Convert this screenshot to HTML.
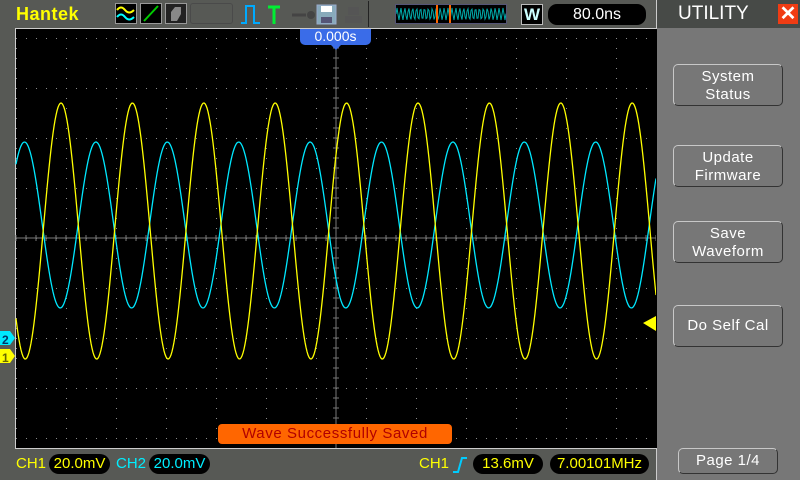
<!DOCTYPE html>
<html><head><meta charset="utf-8"><style>
*{margin:0;padding:0;box-sizing:border-box}
body{width:800px;height:480px;overflow:hidden;background:#575955;font-family:"Liberation Sans",sans-serif;position:relative}
.a{position:absolute}
.btn{position:absolute;left:673px;width:110px;border:1px solid #c8c8c8;border-radius:5px;color:#fff;font-size:15px;text-align:center;line-height:18px;letter-spacing:0.5px;border-right-color:#333;border-bottom-color:#333}
.pill{position:absolute;background:#000;border-radius:10px;height:20px;font-size:15px;line-height:20px;text-align:center}
</style></head><body>
<div class="a" style="left:657px;top:0;width:143px;height:480px;background:#777"></div>
<div class="a" style="left:657px;top:0;width:143px;height:28px;background:#474a47"></div>
<div class="a" style="left:656px;top:0;width:1px;height:480px;background:#ccc"></div>
<div class="a" style="left:678px;top:3px;color:#fff;font-size:19px">UTILITY</div>
<div class="a" style="left:778px;top:4px;width:20px;height:20px;background:#f03c14;color:#fff;font-size:20px;line-height:20px;text-align:center;font-weight:bold">✕</div>
<div class="a" style="left:16px;top:4px;color:#ffff00;font-size:18px;font-weight:bold;letter-spacing:0.5px">Hantek</div>
<div class="a" style="left:115px;top:3px;width:22px;height:21px;background:#000;border:1px solid #999"><svg width="20" height="19"><path d="M1 6 Q5 1 9 6 T18 6" stroke="#ff0" fill="none" stroke-width="2"/><path d="M1 13 Q5 8 9 13 T18 13" stroke="#0ff" fill="none" stroke-width="2"/></svg></div>
<div class="a" style="left:140px;top:3px;width:22px;height:21px;background:#000;border:1px solid #999"><svg width="20" height="19"><path d="M3 17 L17 2" stroke="#0c0" stroke-width="2"/></svg></div>
<div class="a" style="left:165px;top:3px;width:22px;height:21px;background:#222;border:1px solid #999"><svg width="20" height="19"><path d="M5 17 L5 8 L9 3 L15 3 L15 10 L11 17Z" fill="#888"/></svg></div>
<div class="a" style="left:190px;top:3px;width:43px;height:21px;border:1px solid #4a4a4a;border-radius:3px"></div>
<svg class="a" style="left:240px;top:3px" width="130" height="22"><path d="M1 20 H6 V3 H14 V20 H20" stroke="#0af" fill="none" stroke-width="2"/><path d="M28 4 H40 M34 4 V21" stroke="#0e3" stroke-width="3"/><path d="M52 12 H66" stroke="#444" stroke-width="3"/><circle cx="71" cy="12" r="4" fill="#444"/><rect x="77" y="2" width="19" height="19" fill="#8ab" stroke="#9ac"/><rect x="81" y="3" width="11" height="6" fill="#fff"/><rect x="81" y="14" width="11" height="6" fill="#557"/><path d="M105 13 h17 v7 h-17z M108 4 h11 v8 h-11z" fill="#555"/></svg>
<div class="a" style="left:368px;top:1px;width:1px;height:26px;background:#222"></div>
<div class="a" style="left:395px;top:4px;width:112px;height:20px;background:#000;border:1px solid #557"></div>
<svg class="a" style="left:396px;top:5px" width="110" height="18"><path id="mini" stroke="#0aa" fill="none" stroke-width="1"/><rect x="41" y="-1" width="13" height="20" fill="none" stroke="#f60" stroke-width="2"/></svg>
<div class="a" style="left:521px;top:4px;width:22px;height:21px;background:#000;border:1px solid #bbb;color:#cff;font-weight:bold;font-size:17px;text-align:center;line-height:19px">W</div>
<div class="a" style="left:548px;top:4px;width:98px;height:21px;background:#000;border-radius:9px;color:#fff;font-size:16px;text-align:center;line-height:21px">80.0ns</div>
<div class="a" style="left:15px;top:28px;width:642px;height:421px;background:#000;border-top:1px solid #ccc;border-left:1px solid #ccc;border-bottom:1px solid #ccc"></div>
<svg class="a" style="left:0;top:0" width="656" height="480" id="sv">
<g id="grid"></g>
<path id="cy" stroke="#00e8ff" fill="none" stroke-width="1.3"/>
<path id="ye" stroke="#ffff00" fill="none" stroke-width="1.3"/>
<path d="M643 323 L656 316 L656 331Z" fill="#ff0"/>
<path d="M0 331 H10 L15 338 L10 345 H0Z" fill="#00e8ff"/>
<path d="M0 349 H10 L15 356 L10 363 H0Z" fill="#ff0"/>
<text x="2" y="344" font-size="12" font-weight="bold" fill="#036" font-family="Liberation Sans">2</text>
<text x="2" y="362" font-size="12" font-weight="bold" fill="#660" font-family="Liberation Sans">1</text>
</svg>
<div class="a" style="left:300px;top:29px;width:71px;height:16px;background:#3a6ce8;border-radius:0 0 5px 5px;color:#fff;font-size:14px;text-align:center;line-height:15px">0.000s</div>
<div class="a" style="left:331px;top:45px;width:0;height:0;border-left:5px solid transparent;border-right:5px solid transparent;border-top:5px solid #3a6ce8"></div>
<div class="a" style="left:218px;top:424px;width:234px;height:20px;background:#ff6600;border-radius:4px;color:#b00000;font-size:15px;text-align:center;line-height:20px;letter-spacing:0.6px">Wave Successfully Saved</div>
<div class="a" style="left:16px;top:455px;color:#ff0;font-size:15px">CH1</div>
<div class="pill" style="left:49px;top:454px;width:61px;color:#ff0">20.0mV</div>
<div class="a" style="left:116px;top:455px;color:#0ef;font-size:15px">CH2</div>
<div class="pill" style="left:149px;top:454px;width:61px;color:#0ef">20.0mV</div>
<div class="a" style="left:419px;top:455px;color:#ff0;font-size:15px">CH1</div>
<svg class="a" style="left:452px;top:456px" width="16" height="18"><path d="M1 16 H6 L10 2 H15" stroke="#0cf" fill="none" stroke-width="2"/></svg>
<div class="pill" style="left:473px;top:454px;width:70px;color:#ff0">13.6mV</div>
<div class="pill" style="left:550px;top:454px;width:99px;color:#ff0">7.00101MHz</div>
<div class="btn" style="top:64px;height:42px;padding-top:3px">System<br>Status</div>
<div class="btn" style="top:145px;height:42px;padding-top:3px">Update<br>Firmware</div>
<div class="btn" style="top:221px;height:42px;padding-top:3px">Save<br>Waveform</div>
<div class="btn" style="top:305px;height:42px;line-height:40px">Do Self Cal</div>
<div class="btn" style="left:678px;top:448px;width:100px;height:26px;line-height:24px">Page 1/4</div>
<script>
var g='';
for(var x=16;x<=656;x+=10)for(var y=38;y<=438;y+=50)if((x-16)%50)g+='<rect x="'+x+'" y="'+y+'" width="1" height="1" fill="#888"/>';
for(var x=16;x<=656;x+=50)for(var y=38;y<=438;y+=10)g+='<rect x="'+x+'" y="'+y+'" width="1" height="1" fill="#888"/>';
g+='<path d="M16 238H656M336 29V448" stroke="#777"/>';
for(var x=16;x<=656;x+=10)g+='<path d="M'+x+' 235V241" stroke="#777"/>';
for(var y=38;y<=438;y+=10)g+='<path d="M333 '+y+'H339" stroke="#777"/>';
document.getElementById('grid').innerHTML=g;
var P=71.4,y1='',c1='';
for(var x=16;x<=656;x++){
 var yy=231-128*Math.cos(2*Math.PI*(x-61)/P);
 var cc=225-83*Math.cos(2*Math.PI*(x-24.5)/P);
 y1+=(x==16?'M':'L')+x+' '+yy.toFixed(1);
 c1+=(x==16?'M':'L')+x+' '+cc.toFixed(1);
}
document.getElementById('ye').setAttribute('d',y1);
document.getElementById('cy').setAttribute('d',c1);
var m='';
for(var x=0;x<=110;x++){m+=(x?'L':'M')+x+' '+(9-6*Math.sin(x*1.6)).toFixed(1);}
document.getElementById('mini').setAttribute('d',m);
</script>
</body></html>
